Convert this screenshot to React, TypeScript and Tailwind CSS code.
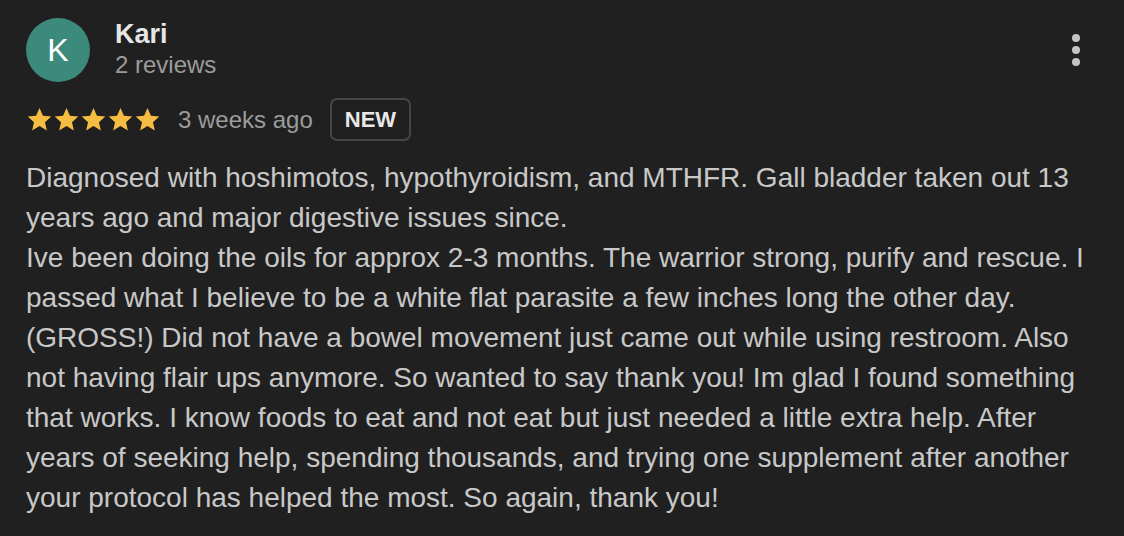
import React from "react";

function Star() {
  return (
    <svg width="27" height="27" viewBox="0 0 24 24" className="block">
      <path
        fill="#f6bd42"
        d="M12 1.8l3.05 6.9 7.45.7-5.65 4.95 1.7 7.35L12 17.85 5.45 21.7l1.7-7.35L1.5 9.4l7.45-.7z"
      />
    </svg>
  );
}

export default function App() {
  return (
    <div
      className="w-[1124px] h-[536px] bg-[#202020] overflow-hidden"
      style={{ fontFamily: '"Liberation Sans", Arial, sans-serif' }}
    >
      <div className="pl-[26px] pr-[24px] pt-[18px]">
        <div className="flex items-start">
          <div className="w-[64px] h-[64px] rounded-full bg-[#3b8a7b] flex items-center justify-center text-white text-[32px] font-light leading-none">
            K
          </div>
          <div className="ml-[25px] flex-1 pt-[1px]">
            <div className="text-[#e6e6e6] text-[27px] font-bold leading-[30px]">Kari</div>
            <div className="text-[#9c9c9c] text-[24px] leading-[32px]">2 reviews</div>
          </div>
          <div className="flex flex-col items-center gap-[4px] mt-[16px] mr-[20px]">
            <span className="block w-[8px] h-[8px] rounded-full bg-[#c4c4c4]" />
            <span className="block w-[8px] h-[8px] rounded-full bg-[#c4c4c4]" />
            <span className="block w-[8px] h-[8px] rounded-full bg-[#c4c4c4]" />
          </div>
        </div>
        <div className="flex items-center mt-[16px] h-[43px]">
          <div className="flex">
            <Star />
            <Star />
            <Star />
            <Star />
            <Star />
          </div>
          <span className="ml-[17px] text-[#9c9c9c] text-[24px]">3 weeks ago</span>
          <span className="ml-[17px] h-[43px] px-[13px] border-2 border-[#44464a] rounded-[7px] flex items-center text-[#e8e8e8] text-[22px] font-bold">
            NEW
          </span>
        </div>
        <p className="mt-[17px] text-[#c8c8c8] text-[28px] leading-[40px]">
          Diagnosed with hoshimotos, hypothyroidism, and MTHFR. Gall bladder taken out 13 years ago and major digestive issues since.
          <br />
          Ive been doing the oils for approx 2-3 months. The warrior strong, purify and rescue. I passed what I believe to be a white flat parasite a few inches long the other day. (GROSS!) Did not have a bowel movement just came out while using restroom. Also not having flair ups anymore. So wanted to say thank you! Im glad I found something that works. I know foods to eat and not eat but just needed a little extra help. After years of seeking help, spending thousands, and trying one supplement after another your protocol has helped the most. So again, thank you!
        </p>
      </div>
    </div>
  );
}
